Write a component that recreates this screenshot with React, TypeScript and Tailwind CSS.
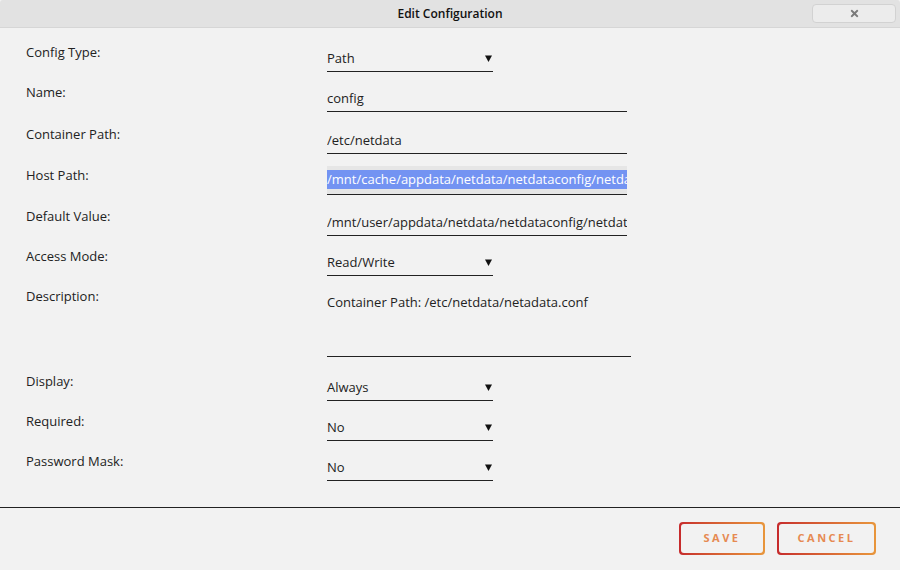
import { FaTimes } from "react-icons/fa"

type Field = {
  label: string
  value: string
  kind: "select" | "text" | "selected" | "textarea"
  h: string
}

const FIELDS: Field[] = [
  { label: "Config Type:", value: "Path", kind: "select", h: "h-[40px]" },
  { label: "Name:", value: "config", kind: "text", h: "h-[42px]" },
  { label: "Container Path:", value: "/etc/netdata", kind: "text", h: "h-[41px]" },
  { label: "Host Path:", value: "/mnt/cache/appdata/netdata/netdataconfig/netdata.conf", kind: "selected", h: "h-[41px]" },
  { label: "Default Value:", value: "/mnt/user/appdata/netdata/netdataconfig/netdata.conf", kind: "text", h: "h-[40px]" },
  { label: "Access Mode:", value: "Read/Write", kind: "select", h: "h-[40px]" },
  { label: "Description:", value: "Container Path: /etc/netdata/netadata.conf", kind: "textarea", h: "h-[85px]" },
  { label: "Display:", value: "Always", kind: "select", h: "h-[40px]" },
  { label: "Required:", value: "No", kind: "select", h: "h-[40px]" },
  { label: "Password Mask:", value: "No", kind: "select", h: "h-[40px]" },
]

function Arrow() {
  return (
    <svg width="7" height="7" viewBox="0 0 7 7" className="mr-[1px]">
      <polygon points="0,0.5 7,0.5 3.5,7" fill="#111" />
    </svg>
  )
}

function Input({ field }: { field: Field }) {
  if (field.kind === "select") {
    return (
      <div className="mt-1 flex h-[28px] w-[166px] items-center justify-between border-b border-[#222] pt-[2px]">
        <span>{field.value}</span>
        <Arrow />
      </div>
    )
  }
  if (field.kind === "textarea") {
    return (
      <div className="mt-1 h-[69px] w-[304px] border-b border-[#222] pt-[5px]">
        <span>{field.value}</span>
      </div>
    )
  }
  if (field.kind === "selected") {
    return (
      <div className="mt-[3px] flex h-[29px] w-[300px] items-start overflow-hidden border-b border-[#222] bg-[#e6e6e6] pt-[4px]">
        <span className="whitespace-nowrap bg-[#7393f2] leading-[19px] text-white">{field.value}</span>
      </div>
    )
  }
  return (
    <div className="mt-1 flex h-[28px] w-[300px] items-center overflow-hidden whitespace-nowrap border-b border-[#222] pt-[2px]">
      {field.value}
    </div>
  )
}

function OutlineButton({ label, w }: { label: string; w: string }) {
  return (
    <div className={`rounded-[4px] bg-gradient-to-r from-[#c62a2c] to-[#e8963c] p-[2px] ${w}`}>
      <div className="flex h-[29px] items-center justify-center rounded-[3px] bg-[#f2f2f2] text-[11px] font-bold tracking-[2.5px] text-[#e68a52]">
        {label}
      </div>
    </div>
  )
}

export default function App() {
  return (
    <div
      className="flex h-[570px] w-[900px] flex-col bg-[#f2f2f2] text-[13px] text-[#222]"
      style={{ fontFamily: '"Open Sans", "Noto Sans", sans-serif' }}
    >
      <div className="relative flex h-[28px] shrink-0 items-center justify-center rounded-t-[3px] border-b border-[#d6d6d6] bg-[#e2e2e2] pt-[1px]">
        <span className="text-[12px] font-semibold text-[#111]">Edit Configuration</span>
        <div className="absolute right-[4px] top-[4px] flex h-[19px] w-[84px] items-center justify-center rounded-[4px] border border-[#d2d2d2] bg-[#ececec]">
          <FaTimes className="size-[11px] text-[#7a7a7a]" />
        </div>
      </div>

      <div className="mt-[12px] flex flex-col">
        {FIELDS.map((f) => (
          <div key={f.label} className={`flex ${f.h}`}>
            <div className="w-[327px] shrink-0 pl-[26px] pt-1 leading-[16px]">{f.label}</div>
            <Input field={f} />
          </div>
        ))}
      </div>

      <div className="mt-[18px] border-t border-[#222]" />

      <div className="flex justify-end gap-3 pr-[24px] pt-[14px]">
        <OutlineButton label="SAVE" w="w-[86px]" />
        <OutlineButton label="CANCEL" w="w-[99px]" />
      </div>
    </div>
  )
}
